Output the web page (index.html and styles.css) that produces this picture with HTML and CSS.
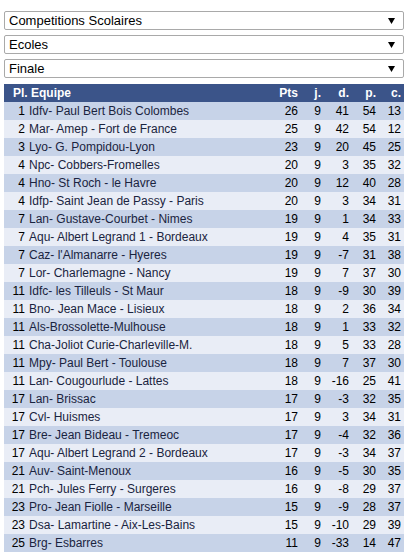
FILE: index.html
```html
<!DOCTYPE html>
<html lang="fr">
<head>
<meta charset="utf-8">
<title>Classement</title>
<link rel="stylesheet" href="styles.css">
</head>
<body>
<div class="page">
  <div class="selects">
    <div class="select"><span>Competitions Scolaires</span><svg class="arrow" width="7" height="6" viewBox="0 0 7 6"><path d="M0 0H7L3.5 6Z" fill="#000"/></svg></div>
    <div class="select"><span>Ecoles</span><svg class="arrow" width="7" height="6" viewBox="0 0 7 6"><path d="M0 0H7L3.5 6Z" fill="#000"/></svg></div>
    <div class="select"><span>Finale</span><svg class="arrow" width="7" height="6" viewBox="0 0 7 6"><path d="M0 0H7L3.5 6Z" fill="#000"/></svg></div>
  </div>
  <table class="ranking">
    <colgroup>
      <col class="c-rank"><col class="c-team"><col class="c-pts"><col class="c-j"><col class="c-d"><col class="c-p"><col class="c-c">
    </colgroup>
    <thead>
      <tr><th colspan="2" class="h-team">Pl. Equipe</th><th>Pts</th><th>j.</th><th>d.</th><th>p.</th><th>c.</th></tr>
    </thead>
    <tbody>
      <tr><td>1</td><td class="team">Idfv- Paul Bert Bois Colombes</td><td>26</td><td>9</td><td>41</td><td>54</td><td>13</td></tr>
      <tr><td>2</td><td class="team">Mar- Amep - Fort de France</td><td>25</td><td>9</td><td>42</td><td>54</td><td>12</td></tr>
      <tr><td>3</td><td class="team">Lyo- G. Pompidou-Lyon</td><td>23</td><td>9</td><td>20</td><td>45</td><td>25</td></tr>
      <tr><td>4</td><td class="team">Npc- Cobbers-Fromelles</td><td>20</td><td>9</td><td>3</td><td>35</td><td>32</td></tr>
      <tr><td>4</td><td class="team">Hno- St Roch - le Havre</td><td>20</td><td>9</td><td>12</td><td>40</td><td>28</td></tr>
      <tr><td>4</td><td class="team">Idfp- Saint Jean de Passy - Paris</td><td>20</td><td>9</td><td>3</td><td>34</td><td>31</td></tr>
      <tr><td>7</td><td class="team">Lan- Gustave-Courbet - Nimes</td><td>19</td><td>9</td><td>1</td><td>34</td><td>33</td></tr>
      <tr><td>7</td><td class="team">Aqu- Albert Legrand 1 - Bordeaux</td><td>19</td><td>9</td><td>4</td><td>35</td><td>31</td></tr>
      <tr><td>7</td><td class="team">Caz- l'Almanarre - Hyeres</td><td>19</td><td>9</td><td>-7</td><td>31</td><td>38</td></tr>
      <tr><td>7</td><td class="team">Lor- Charlemagne - Nancy</td><td>19</td><td>9</td><td>7</td><td>37</td><td>30</td></tr>
      <tr><td>11</td><td class="team">Idfc- les Tilleuls - St Maur</td><td>18</td><td>9</td><td>-9</td><td>30</td><td>39</td></tr>
      <tr><td>11</td><td class="team">Bno- Jean Mace - Lisieux</td><td>18</td><td>9</td><td>2</td><td>36</td><td>34</td></tr>
      <tr><td>11</td><td class="team">Als-Brossolette-Mulhouse</td><td>18</td><td>9</td><td>1</td><td>33</td><td>32</td></tr>
      <tr><td>11</td><td class="team">Cha-Joliot Curie-Charleville-M.</td><td>18</td><td>9</td><td>5</td><td>33</td><td>28</td></tr>
      <tr><td>11</td><td class="team">Mpy- Paul Bert - Toulouse</td><td>18</td><td>9</td><td>7</td><td>37</td><td>30</td></tr>
      <tr><td>11</td><td class="team">Lan- Cougourlude - Lattes</td><td>18</td><td>9</td><td>-16</td><td>25</td><td>41</td></tr>
      <tr><td>17</td><td class="team">Lan- Brissac</td><td>17</td><td>9</td><td>-3</td><td>32</td><td>35</td></tr>
      <tr><td>17</td><td class="team">Cvl- Huismes</td><td>17</td><td>9</td><td>3</td><td>34</td><td>31</td></tr>
      <tr><td>17</td><td class="team">Bre- Jean Bideau - Tremeoc</td><td>17</td><td>9</td><td>-4</td><td>32</td><td>36</td></tr>
      <tr><td>17</td><td class="team">Aqu- Albert Legrand 2 - Bordeaux</td><td>17</td><td>9</td><td>-3</td><td>34</td><td>37</td></tr>
      <tr><td>21</td><td class="team">Auv- Saint-Menoux</td><td>16</td><td>9</td><td>-5</td><td>30</td><td>35</td></tr>
      <tr><td>21</td><td class="team">Pch- Jules Ferry - Surgeres</td><td>16</td><td>9</td><td>-8</td><td>29</td><td>37</td></tr>
      <tr><td>23</td><td class="team">Pro- Jean Fiolle - Marseille</td><td>15</td><td>9</td><td>-9</td><td>28</td><td>37</td></tr>
      <tr><td>23</td><td class="team">Dsa- Lamartine - Aix-Les-Bains</td><td>15</td><td>9</td><td>-10</td><td>29</td><td>39</td></tr>
      <tr><td>25</td><td class="team">Brg- Esbarres</td><td>11</td><td>9</td><td>-33</td><td>14</td><td>47</td></tr>
    </tbody>
  </table>
</div>
</body>
</html>
```

FILE: styles.css
```css
html, body {
  margin: 0;
  padding: 0;
  background: #fff;
}

body {
  font-family: "Liberation Sans", Arial, sans-serif;
  color: #000;
}

.page {
  width: 400px;
  padding: 11px 12px 0 4px;
}

.selects {
  display: flex;
  flex-direction: column;
  gap: 5px;
  margin-bottom: 6px;
}

.select {
  box-sizing: border-box;
  height: 19px;
  border: 1px solid #a9a9a9;
  border-radius: 2px;
  background: #fff;
  display: flex;
  align-items: center;
  justify-content: space-between;
  padding: 0 8px 0 4px;
  font-size: 13px;
  line-height: 17px;
  color: #000;
}

.arrow {
  display: block;
  margin-top: 1px;
}

.ranking {
  width: 400px;
  border-collapse: separate;
  border-spacing: 0;
  table-layout: fixed;
  font-size: 12px;
}

.c-rank { width: 22px; }
.c-pts { width: 30px; }
.c-j { width: 23px; }
.c-d { width: 28px; }
.c-p { width: 27px; }
.c-c { width: 25px; }

.ranking tr {
  height: 18px;
}

.ranking th,
.ranking td {
  box-sizing: border-box;
  height: 18px;
  padding: 0 3px 0 0;
  line-height: 14px;
  text-align: right;
  white-space: nowrap;
  vertical-align: middle;
}

.ranking thead tr {
  background: #3b5489;
}

.ranking th {
  color: #fff;
  font-weight: bold;
}

.ranking th.h-team {
  text-align: left;
  padding-left: 9px;
}

.ranking td:first-child {
  padding-right: 1px;
}

.ranking td.team {
  text-align: left;
  padding-left: 3px;
  color: #1a2440;
}

.ranking tbody tr:nth-child(odd) {
  background: #c7d3e8;
}

.ranking tbody tr:nth-child(even) {
  background: #e9edf6;
}
```
